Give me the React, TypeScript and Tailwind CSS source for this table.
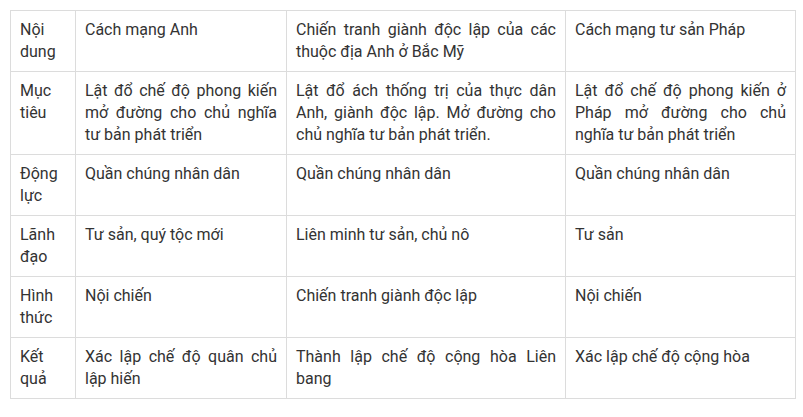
const rows: [string, string, string, string][] = [
  ['Nội dung', 'Cách mạng Anh', 'Chiến tranh giành độc lập của các thuộc địa Anh ở Bắc Mỹ', 'Cách mạng tư sản Pháp'],
  ['Mục tiêu', 'Lật đổ chế độ phong kiến mở đường cho chủ nghĩa tư bản phát triển', 'Lật đổ ách thống trị của thực dân Anh, giành độc lập. Mở đường cho chủ nghĩa tư bản phát triển.', 'Lật đổ chế độ phong kiến ở Pháp mở đường cho chủ nghĩa tư bản phát triển'],
  ['Động lực', 'Quần chúng nhân dân', 'Quần chúng nhân dân', 'Quần chúng nhân dân'],
  ['Lãnh đạo', 'Tư sản, quý tộc mới', 'Liên minh tư sản, chủ nô', 'Tư sản'],
  ['Hình thức', 'Nội chiến', 'Chiến tranh giành độc lập', 'Nội chiến'],
  ['Kết quả', 'Xác lập chế độ quân chủ lập hiến', 'Thành lập chế độ cộng hòa Liên bang', 'Xác lập chế độ cộng hòa'],
];

export default function App() {
  return (
    <div className="w-[803px] h-[417px] bg-white pt-[10px] pl-[10px]" style={{ fontFamily: 'Roboto, "Noto Sans", sans-serif' }}>
      <table className="border-collapse table-fixed w-[785px] text-[16px] leading-[22px] text-[#333]">
        <colgroup>
          <col className="w-[65px]" />
          <col className="w-[211px]" />
          <col className="w-[279px]" />
          <col className="w-[230px]" />
        </colgroup>
        <tbody>
          {rows.map((r, i) => (
            <tr key={i}>
              {r.map((c, j) => (
                <td key={j} className="border border-[#dcdcdc] px-[9px] pt-[8px] pb-[8px] align-top text-justify">
                  {c}
                </td>
              ))}
            </tr>
          ))}
        </tbody>
      </table>
    </div>
  );
}
